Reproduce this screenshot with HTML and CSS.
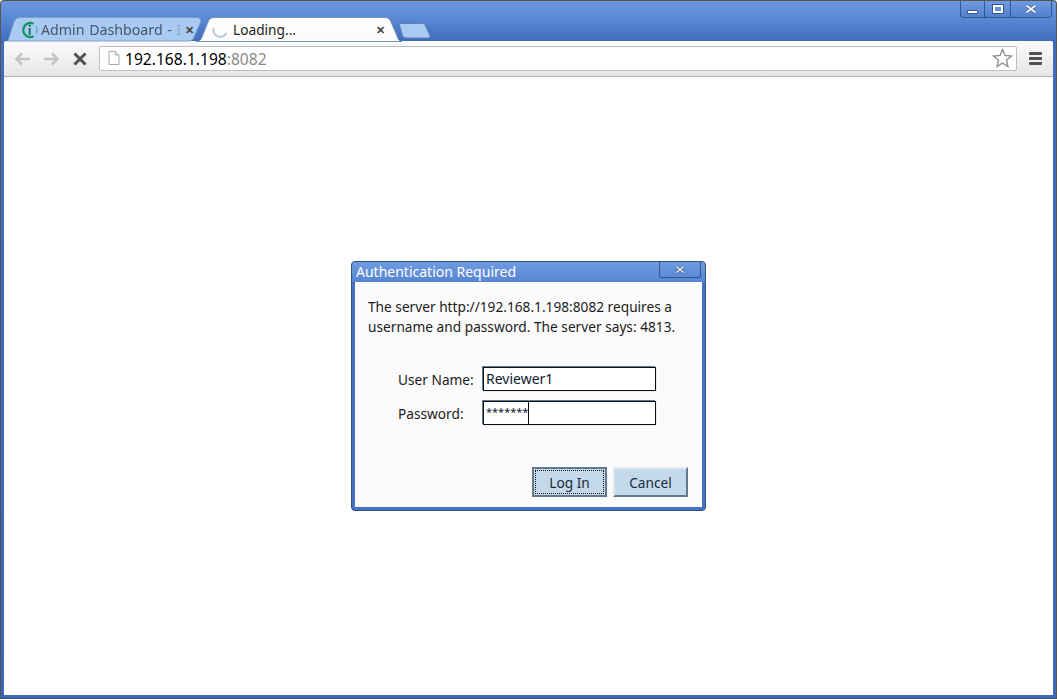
FILE: index.html
```html
<!DOCTYPE html>
<html lang="en">
<head>
<meta charset="utf-8">
<title>Loading...</title>
<link rel="stylesheet" href="styles.css">
</head>
<body>
<div class="window">
  <header class="strip">
    <div class="tab tab-inactive">
      <svg class="tab-bg" width="196" height="25" viewBox="0 0 196 25"><path d="M0 24L6 5C7 2 9 .5 13 .5H187C191 .5 193 1.500 193 4L186 20C185 23 183 24 181 24Z" fill="#a9cbf2" stroke="#7f9fc9" stroke-width="1"/></svg>
      <svg class="favicon" width="18" height="18" viewBox="0 0 18 18"><path d="M12.500 2.800A7 7 0 1 0 12.500 15.200" fill="none" stroke="#15935f" stroke-width="2.100"/><path d="M14.800 5A7 7 0 0 1 14.800 13" fill="none" stroke="#15935f" stroke-width="1.200" opacity=".55"/><path d="M8.700 7V14" stroke="#157a55" stroke-width="2"/><circle cx="8.700" cy="4.600" r="1.200" fill="#157a55"/></svg>
      <span class="tab-title tab-title-fade">Admin Dashboard - I</span>
      <span class="tab-close tab-close-inactive">✕</span>
    </div>
    <div class="tab tab-active">
      <svg class="tab-bg" width="207" height="25" viewBox="0 0 207 25"><path d="M0 24.500C3 24.500 5 23 6 20L12 5C13 2 15 .5 19 .5H189C192 .5 194 2 195 5L201 19C202 23 204 24.500 206 24.500Z" fill="url(#tabfill)" stroke="#7790b8" stroke-width="1"/><defs><linearGradient id="tabfill" x1="0" y1="0" x2="0" y2="1"><stop offset="0" stop-color="#fff"/><stop offset="1" stop-color="#fafafa"/></linearGradient></defs></svg>
      <svg class="spinner" width="18" height="18" viewBox="0 0 18 18"><path d="M2.500 8A7 7 0 0 0 15.500 13" transform="translate(0 -1)" fill="none" stroke="#bccbda" stroke-width="2"/></svg>
      <span class="tab-title tab-title-dark">Loading...</span>
      <span class="tab-close">✕</span>
    </div>
    <svg class="new-tab" width="33" height="17" viewBox="0 0 33 17"><path d="M1 1.500H24C26 1.500 27 2 27.500 4L32 14C32 15.500 31 16 29 16H8C6 16 5 15 4.500 13.500Z" fill="#a9cbf2" stroke="#5f7fb5"/></svg>
    <div class="caption">
      <div class="cap cap-min"><span class="glyph-min"></span></div>
      <div class="cap cap-max"><span class="glyph-max"></span></div>
      <div class="cap cap-close"><svg width="14" height="10" viewBox="0 0 14 10"><path d="M2.500 1.500L11.500 8.500M11.500 1.500L2.500 8.500" stroke="#3d5f92" stroke-width="3.200"/><path d="M2.500 1.500L11.500 8.500M11.500 1.500L2.500 8.500" stroke="#fff" stroke-width="1.600"/></svg></div>
    </div>
  </header>
  <nav class="toolbar">
    <svg class="nav-icon" width="17" height="14" viewBox="0 0 17 14"><path d="M16 7H3M8 1.500L2.500 7L8 12.500" fill="none" stroke="#c4c4c4" stroke-width="2.600"/></svg>
    <svg class="nav-icon" width="17" height="14" viewBox="0 0 17 14"><path d="M1 7H14M9 1.500L14.500 7L9 12.500" fill="none" stroke="#c4c4c4" stroke-width="2.600"/></svg>
    <svg class="nav-stop" width="14" height="14" viewBox="0 0 14 14"><path d="M1.500 1.500L12.500 12.500M12.500 1.500L1.500 12.500" stroke="#505050" stroke-width="3"/></svg>
    <div class="omnibox">
      <svg class="page-icon" width="12" height="14" viewBox="0 0 12 14"><path d="M1 .500H7.500L11 4V13.500H1Z" fill="#fff" stroke="#a8a8a8"/><path d="M7.500 .500V4H11" fill="#e8e8e8" stroke="#a8a8a8"/></svg>
      <span class="url"><span class="url-host">192.168.1.198</span>:8082</span>
      <svg class="star" width="21" height="20" viewBox="0 0 21 20"><path d="M10.500 1.500L13 7.500L19.500 8L14.500 12L16 18.500L10.500 15L5 18.500L6.500 12L1.500 8L8 7.500Z" fill="#fff" stroke="#8b8b8b" stroke-width="1.300"/></svg>
    </div>
    <div class="menu"><span></span><span></span><span></span></div>
  </nav>
  <main class="page">
    <section class="dialog">
      <div class="dialog-title">
        <span>Authentication Required</span>
        <div class="dialog-close"><svg width="14" height="10" viewBox="0 0 14 10"><path d="M3.500 1.500L10.500 7.500M10.500 1.500L3.500 7.500" stroke="#3d5f92" stroke-width="2.800"/><path d="M3.500 1.500L10.500 7.500M10.500 1.500L3.500 7.500" stroke="#fff" stroke-width="1.300"/></svg></div>
      </div>
      <div class="dialog-body">
        <p class="message">The server http://192.168.1.198:8082 requires a<br>username and password. The server says: 4813.</p>
        <div class="field field-user">
          <label class="label">User Name:</label>
          <div class="input">Reviewer1</div>
        </div>
        <div class="field">
          <label class="label">Password:</label>
          <div class="input input-pass"><span class="mask">*******</span></div>
        </div>
        <div class="buttons">
          <button class="btn btn-default"><span class="focus">Log In</span></button>
          <button class="btn btn-cancel">Cancel</button>
        </div>
      </div>
    </section>
  </main>
</div>
</body>
</html>
```

FILE: styles.css
```css
* { box-sizing: border-box; }
html, body { margin: 0; height: 100%; overflow: hidden; }
body { font-family: "Noto Sans", "Open Sans", sans-serif; background: #fff; }

.window {
  width: 1057px;
  height: 699px;
  display: flex;
  flex-direction: column;
  padding: 0 3px 3px;
  border: 1px solid #555;
  border-bottom-color: #3c4a63;
  border-radius: 4px 4px 0 0;
  background: linear-gradient(#6b97dc 0, #5b8ad6 16px, #3f6dbe 40px, #3b68ba 100%);
}

.strip {
  height: 40px;
  flex: none;
  display: flex;
  align-items: flex-start;
  position: relative;
  padding: 16px 0 0 4px;
}

.tab { position: relative; height: 25px; display: flex; align-items: center; flex: none; }
.tab-bg { position: absolute; left: 0; top: 0; }
.tab-inactive { width: 196px; padding-left: 13px; }
.tab-active { width: 205px; margin-left: -8px; padding-left: 15px; }
.favicon, .spinner { position: relative; flex: none; }
.tab-title { position: relative; font-size: 14px; line-height: 25px; white-space: nowrap; overflow: hidden; }
.tab-title-fade {
  width: 141px;
  margin-left: 2px;
  color: #46566c;
  font-size: 14.2px;
  word-spacing: 1px;
  -webkit-mask-image: linear-gradient(to right, #000 130px, transparent 141px);
  mask-image: linear-gradient(to right, #000 130px, transparent 141px);
}
.tab-title-dark { width: 140px; margin-left: 4px; color: #1e1e1e; font-size: 13.7px; }
.tab-close { position: relative; font-size: 11px; color: #444; font-weight: 700; margin-left: 3px; }
.new-tab { margin: 5px 0 0 -3px; flex: none; }

.caption {
  position: absolute;
  right: 1px;
  top: 0;
  height: 17px;
  width: 92px;
  display: flex;
  border: 1px solid #34568f;
  border-top: 0;
  border-radius: 0 0 4px 4px;
  background: linear-gradient(#6f9be0, #5380cd);
}
.cap { height: 100%; display: flex; align-items: center; justify-content: center; }
.cap-min { width: 24px; border-right: 1px solid #34568f; }
.cap-max { width: 26px; border-right: 1px solid #34568f; }
.cap-close { flex: 1; }
.glyph-min { width: 11px; height: 4px; margin-top: 6px; background: #fff; border: 1px solid #34568f; border-radius: 1px; }
.glyph-max { width: 10px; height: 8px; border: 2px solid #fff; outline: 1px solid #34568f; }

.toolbar {
  height: 36px;
  flex: none;
  display: flex;
  align-items: center;
  padding: 0 11px 1px 10px;
  background: linear-gradient(#fbfbfb, #e6e6e6);
  border-bottom: 1px solid #b3b3b3;
  border-radius: 2px 2px 0 0;
}
.nav-icon { flex: none; margin: 1px 12px 0 0; }
.nav-icon + .nav-icon { margin-right: 13px; }
.nav-stop { flex: none; margin: 1px 0 0 0; }
.omnibox {
  margin-left: 12px;
  flex: none;
  width: 918px;
  height: 25px;
  display: flex;
  align-items: center;
  padding: 0 3px 0 8px;
  background: #fff;
  border: 1px solid #bfbfbf;
  border-radius: 2px;
}
.page-icon { flex: none; }
.url { flex: 1; margin-left: 5px; padding-top: 1px; font-size: 15.6px; color: #8a8a8a; white-space: nowrap; }
.url-host { color: #000; }
.star { flex: none; }
.menu { margin-left: 12px; width: 13px; display: flex; flex-direction: column; gap: 2px; }
.menu span { height: 3px; background: #505050; border-radius: 1px; }

.page {
  flex: 1;
  min-height: 0;
  display: flex;
  align-items: center;
  justify-content: center;
  background: #fff;
}

.dialog {
  width: 355px;
  height: 250px;
  display: flex;
  flex-direction: column;
  padding: 0 3px 3px;
  background: #4673c3;
  border: 1px solid #35537f;
  border-radius: 4px;
}
.dialog-title {
  height: 20px;
  flex: none;
  display: flex;
  justify-content: space-between;
  color: #fff;
  font-size: 14px;
  line-height: 20px;
  background: linear-gradient(#6e9be0, #5785d2);
  margin: 0 -3px;
  padding: 0 4px 0 4px;
  border-radius: 3px 3px 0 0;
}
.dialog-close {
  width: 42px;
  height: 16px;
  display: flex;
  align-items: center;
  justify-content: center;
  border: 1px solid #34568f;
  border-top: 0;
  border-radius: 0 0 3px 3px;
}
.dialog-body {
  flex: 1;
  min-height: 0;
  display: flex;
  flex-direction: column;
  padding: 15px 14px 10px 13px;
  background: #fbfbfb;
  color: #1c1c1c;
  font-size: 13.7px;
}
.message { margin: 0; line-height: 20px; white-space: nowrap; }
.field { display: flex; align-items: center; height: 24px; padding-left: 30px; margin-bottom: 10px; }
.field-user { margin-top: 30px; }
.label { width: 85px; flex: none; }
.input {
  width: 173px;
  height: 24px;
  background: #fff;
  border: 1px solid #101010;
  box-shadow: -1px -1px 0 #64798f, 1px 1px 0 #e6eef5;
  color: #101a33;
  font-size: 14px;
  padding-left: 2px;
  line-height: 21px;
  white-space: nowrap;
}
.input-pass { padding: 0; }
.mask { display: block; height: 22px; width: 45px; padding-left: 2px; border-right: 1px solid #101010; font-size: 11px; line-height: 19px; }
.buttons { margin-top: auto; display: flex; justify-content: flex-end; gap: 6px; }
.btn {
  height: 30px;
  padding: 0;
  font: inherit;
  color: #1c2b40;
  background: #c4d9e9;
  border: 2px solid;
  border-color: #dfe9f1 #64798f #64798f #dfe9f1;
}
.btn-cancel { width: 75px; }
.btn-default { width: 75px; border-color: #64798f; padding: 1px; }
.focus { display: block; height: 100%; line-height: 23px; border: 1px dotted #111; }
```
